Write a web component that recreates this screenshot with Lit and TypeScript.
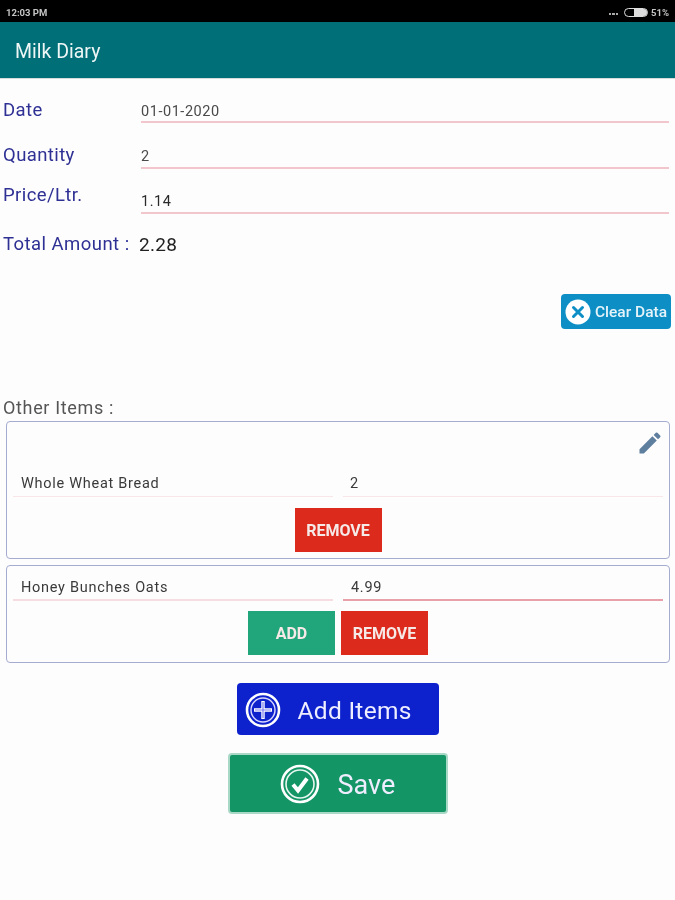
import { LitElement, html, css } from "lit";
import { customElement } from "lit/decorators.js";

@customElement("app-root")
export class AppRoot extends LitElement {
  static styles = css`
    :host { display: block; width: 675px; height: 900px; background: #fdfdfd; font-family: Roboto, "Liberation Sans", sans-serif; overflow: hidden; filter: blur(0.35px); }
    .status { height: 22px; background: #000; color: #c4c4c4; display: flex; align-items: center; padding: 2px 6px 0 6px; font-size: 9.5px; font-weight: 700; box-sizing: border-box; }
    .status .right { margin-left: auto; display: flex; align-items: center; gap: 3px; }
    .dots { display: flex; gap: 1px; align-items: flex-end; height: 6px; margin-right: 3px; }
    .dots i { width: 2.5px; height: 2px; background: #aaa; display: block; }
    .batt { width: 24px; height: 9px; border: 1px solid #ddd; border-radius: 5px; box-sizing: border-box; overflow: hidden; display: flex; justify-content: flex-end; }
    .batt b { display: block; width: 13px; background: #ddd; }
    .bar { height: 56px; background: #006f78; color: #eef6f6; display: flex; align-items: center; padding: 2px 0 0 15px; font-size: 19.5px; border-bottom: 1px solid #d6dcdc; box-sizing: border-box; height: 57px; }
    .form { display: flex; flex-direction: column; }
    .row { display: grid; grid-template-columns: 141px 528px; align-items: end; }
    .label { color: #2e3094; font-size: 18.5px; padding-left: 3px; letter-spacing: 0.4px; }
    .field { font-size: 14.5px; color: #4a4a4a; letter-spacing: 0.55px; border-bottom: 2px solid #f2c6cd; height: 22px; line-height: 19px; box-sizing: border-box; }
    .r1 { height: 44px; }
    .r1 .label { align-self: start; padding-top: 20px; }
    .r1 .field { line-height: 21px; }
    .r2 { height: 46px; }
    .r2 .label { align-self: start; padding-top: 21px; }
    .r3 { height: 45px; }
    .r3 .label { align-self: start; padding-top: 15px; }
    .r3 .field { color: #2a2a2a; }
    .total { display: flex; align-items: center; margin-top: 17px; height: 26px; padding-left: 3px; }
    .total .label { padding-left: 0; width: 136px; letter-spacing: 0.45px; }
    .total .val { font-size: 19px; color: #222; letter-spacing: 0.3px; }
    .clear-wrap { display: flex; justify-content: flex-end; padding: 37px 4px 0 0; }
    .clear { width: 110px; height: 35px; background: #0d8fc5; border-radius: 4px; color: #e6f4fa; display: flex; align-items: center; padding: 1px 0 0 4px; gap: 4px; font-size: 15.5px; font-weight: 500; box-sizing: border-box; white-space: nowrap; }
    .clear svg { margin-top: -1px; }
    .other { margin-top: 67px; padding-left: 3px; font-size: 18px; color: #555; height: 22px; line-height: 24px; letter-spacing: 0.65px; }
    .card { margin: 0 5px 0 6px; border: 1.5px solid #a6abd0; border-radius: 4px; box-sizing: border-box; position: relative; }
    .c1 { height: 138px; margin-top: 3px; padding: 42px 6px 0 6px; }
    .c2 { height: 98px; margin-top: 6px; padding: 2px 6px 0; }
    .pencil { position: absolute; right: 5px; top: 7px; width: 28px; height: 28px; }
    .inputs { display: grid; grid-template-columns: 320px 320px; column-gap: 10px; }
    .inp { height: 33px; font-size: 14.5px; color: #3a3a3a; padding-left: 8px; line-height: 40px; border-bottom: 1px solid #f8e6e8; box-sizing: border-box; letter-spacing: 0.72px; white-space: nowrap; }
    .c1 .inp:last-child { padding-left: 7px; }
    .c2 .inp { height: 33px; line-height: 39px; }
    .c2 .inp.first { border-bottom: 2px solid #f6dde1; }
    .c2 .inp.active { border-bottom: 2px solid #e8a0aa; }
    .btns { display: flex; justify-content: center; gap: 6px; margin-top: 11px; }
    .c2 .btns { margin-top: 10px; }
    .btn { width: 87px; height: 44px; display: flex; align-items: center; justify-content: center; color: #f6eae8; font-size: 16px; font-weight: 700; box-sizing: border-box; }
    .red { background: #dc2a1c; }
    .green { background: #20a67a; }
    .actions { display: flex; flex-direction: column; align-items: center; }
    .add { width: 202px; height: 52px; background: #0d22cc; border-radius: 4px; margin-top: 20px; color: #eef; display: flex; align-items: center; padding: 2px 0 0 8px; box-sizing: border-box; font-size: 24.5px; gap: 17px; letter-spacing: 0.3px; }
    .add svg, .save svg { margin-top: -1px; }
    .save { width: 220px; height: 61px; background: #149566; border: 2px solid #a9d8c6; border-radius: 4px; margin-top: 18px; color: #eef; display: flex; align-items: center; box-sizing: border-box; font-size: 27px; padding: 2px 0 0 50px; gap: 18px; }
  `;

  render() {
    return html`
      <div class="status">
        <span>12:03 PM</span>
        <div class="right">
          <span class="dots"><i></i><i></i><i></i></span>
          <span class="batt"><b></b></span>
          <span>51%</span>
        </div>
      </div>
      <div class="bar">Milk Diary</div>
      <div class="form">
        <div class="row r1"><div class="label">Date</div><div class="field">01-01-2020</div></div>
        <div class="row r2"><div class="label">Quantity</div><div class="field">2</div></div>
        <div class="row r3"><div class="label">Price/Ltr.</div><div class="field">1.14</div></div>
        <div class="total"><div class="label">Total Amount :</div><div class="val">2.28</div></div>
      </div>
      <div class="clear-wrap">
        <div class="clear">
          <svg width="26" height="26" viewBox="0 0 26 26"><circle cx="13" cy="13" r="12.5" fill="#fff"/><path d="M8.5 8.5l9 9M17.5 8.5l-9 9" stroke="#0d8fc5" stroke-width="3" stroke-linecap="round"/></svg>
          <span>Clear Data</span>
        </div>
      </div>
      <div class="other">Other Items :</div>
      <div class="card c1">
        <svg class="pencil" viewBox="0 0 24 24"><path fill="#5f7f9f" d="M3 17.25V21h3.75L17.81 9.94l-3.75-3.75L3 17.25zM20.71 7.04a1 1 0 0 0 0-1.41l-2.34-2.34a1 1 0 0 0-1.41 0l-1.83 1.83 3.75 3.75 1.83-1.83z"/></svg>
        <div class="inputs">
          <div class="inp">Whole Wheat Bread</div>
          <div class="inp">2</div>
        </div>
        <div class="btns"><div class="btn red">REMOVE</div></div>
      </div>
      <div class="card c2">
        <div class="inputs">
          <div class="inp first">Honey Bunches Oats</div>
          <div class="inp active">4.99</div>
        </div>
        <div class="btns"><div class="btn green">ADD</div><div class="btn red">REMOVE</div></div>
      </div>
      <div class="actions">
        <div class="add">
          <svg width="36" height="36" viewBox="0 0 36 36" fill="none"><circle cx="18" cy="18" r="16" stroke="#fff" stroke-width="2.6"/><circle cx="18" cy="18" r="12" stroke="#d8d8ff" stroke-width="1.4"/><path d="M18 9v18M9 18h18" stroke="#fff" stroke-width="3.4"/><path d="M18 10v16M10 18h16" stroke="#7a7cf0" stroke-width="1.2"/></svg>
          <span>Add Items</span>
        </div>
        <div class="save">
          <svg width="40" height="40" viewBox="0 0 40 40" fill="none"><circle cx="20" cy="20" r="18" stroke="#fff" stroke-width="2.6"/><circle cx="20" cy="20" r="14" stroke="#e6f6f0" stroke-width="1.6"/><path d="M13 20.5l5 6 9-12" stroke="#fff" stroke-width="4"/></svg>
          <span>Save</span>
        </div>
      </div>
    `;
  }
}
